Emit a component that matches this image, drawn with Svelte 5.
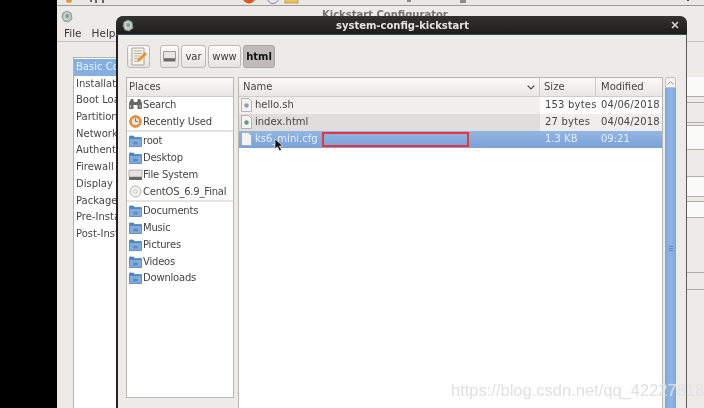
<script>
  const menu = ['Basic Co', 'Installation', 'Boot Loader', 'Partition', 'Network', 'Authentication', 'Firewall', 'Display', 'Package', 'Pre-Installation', 'Post-Installation'];
  const placesA = [{ n: 'Search', i: 'search' }, { n: 'Recently Used', i: 'recent' }];
  const placesB = [{ n: 'root', i: 'folder' }, { n: 'Desktop', i: 'folder' }, { n: 'File System', i: 'drive' }, { n: 'CentOS_6.9_Final', i: 'disc' }];
  const placesC = ['Documents', 'Music', 'Pictures', 'Videos', 'Downloads'].map((n) => ({ n, i: 'folder' }));
  const files = [
    { n: 'hello.sh', s: '153 bytes', m: '04/06/2018', c: 'odd', dot: '#8d9cc0' },
    { n: 'index.html', s: '27 bytes', m: '04/04/2018', c: 'even', dot: '#5f9a80' },
    { n: 'ks6_mini.cfg', s: '1.3 KB', m: '09:21', c: 'sel', dot: '' }
  ];
  const strip = [
    { h: 20, p: true }, { h: 6 }, { h: 20 }, { h: 3 }, { h: 24, p: true }, { h: 27 },
    { h: 20, p: true }, { h: 5 }, { h: 16, p: true }, { h: 55 }, { h: 17 }
  ];
</script>

{#snippet gem(x)}
  <svg class="gem" width="12" height="13" viewBox="0 0 12 13" style="margin-left:{x}px">
    <path d="M2 3 6 1l4 2 1 6-4 3-4-1-2-4z" fill="#b9c4bd" stroke="#7d8a84" stroke-width=".8"/>
    <path d="M4 4l3-1 2 3-2 3-3-1zM3 8l2 2" fill="#7fa58f" stroke="#e4e8e4" stroke-width=".7"/>
  </svg>
{/snippet}

{#snippet icon(t)}
  <svg class="ico" width="15" height="15" viewBox="0 0 15 15">
    {#if t === 'folder'}
      <path d="M1.500 3h4l1 1.500h7v9h-12z" fill="#4d86c6" stroke="#4a7cb6" stroke-width=".7"/>
      <path d="M2 6h11v7H2z" fill="#82acdc"/>
      <path d="M5 9.500c1-1.500 4-1.500 5 0v2H5z" fill="#5b8ec8"/>
    {:else if t === 'search'}
      <path d="M1 6l2-4h2l1 3h3l1-3h2l2 4v6H9.500V8h-4v4H1z" fill="#6a6864"/>
      <path d="M2.500 8v3M12 8v3" stroke="#c5c3bf" stroke-width="1"/>
    {:else if t === 'recent'}
      <circle cx="7.500" cy="7.500" r="6" fill="#e8923a" stroke="#d67e28" stroke-width=".6"/>
      <circle cx="7.500" cy="7.500" r="3.600" fill="#eee9df"/>
      <path d="M7.500 4.500v3h2.500" stroke="#7a7468" stroke-width="1" fill="none"/>
    {:else if t === 'drive'}
      <path d="M1 3h13v7H1z" fill="#e4e3e0" stroke="#9a9995" stroke-width=".7"/>
      <path d="M1 10h13v3H1z" fill="#6a6965"/>
    {:else}
      <circle cx="7.500" cy="7.500" r="5.500" fill="#f2f1ef" stroke="#b5b4b1" stroke-width="1"/>
      <circle cx="7.500" cy="7.500" r="1.800" fill="#fff" stroke="#b5b4b1" stroke-width=".8"/>
    {/if}
  </svg>
{/snippet}

{#snippet place(p)}
  <div class="place">{@render icon(p.i)}<span>{p.n}</span></div>
{/snippet}

<div class="desk">
  <div class="panel">
    <svg width="647" height="5" viewBox="0 0 647 5">
      <circle cx="12" cy="0" r="3" fill="#d9a040"/>
      <path d="M33 0h2v2h-2zM38 0h2v3h-2zM45 0h2v3h-2z" fill="#666"/>
      <circle cx="192" cy="-3" r="6.500" fill="#de5a1c"/>
      <circle cx="216" cy="-2" r="5.500" fill="#ece9ee" stroke="#8f78a8"/>
      <rect x="228" y="-3" width="13" height="6" fill="#e9c264" stroke="#b58d35" stroke-width=".7"/>
      <path d="M350 0h4v2h-4zM403 0h6v3h-6z" fill="#8d8c88"/>
      <path d="M630 0h2v1h-2z" fill="#444"/>
    </svg>
  </div>

  <div class="backwin">
    <div class="backtitle">
      {@render gem(4)}
      <span class="backname">Kickstart Configurator</span>
    </div>
    <div class="menubar"><span>File</span><span>Help</span></div>
    <div class="backmain">
      <ul class="steps">
        {#each menu as m, i}
          <li class:on={i === 0}>{m}</li>
        {/each}
      </ul>
      <div class="backform">
        {#each strip as s}
          <div class="stripe" class:pale={s.p} style="height:{s.h}px"></div>
        {/each}
      </div>
    </div>
  </div>

  <section class="dialog">
    <header class="dtitle">
      {@render gem(3)}
      <span class="dname">system-config-kickstart</span>
      <svg class="close" width="8" height="8" viewBox="0 0 8 8"><path d="M1 1l6 6M7 1 1 7" stroke="#d8d6d2" stroke-width="1.600"/></svg>
    </header>
    <div class="dbody">
      <div class="toolbar">
        <button class="btn edit" aria-label="edit">
          <svg width="18" height="19" viewBox="0 0 18 19">
            <path d="M2 1h12v17H2z" fill="#f5f3e8" stroke="#a7a59c"/>
            <path d="M4 4h8M4 6.500h8M4 9h6M4 11.500h5M4 14h4" stroke="#a8a69e" stroke-width=".9"/>
            <path d="M15 5l2 2-7 7-3 1 1-3z" fill="#e8912c"/>
          </svg>
        </button>
        <div class="crumbs">
          <button class="btn disk" aria-label="filesystem">
            <svg width="13" height="11" viewBox="0 0 13 11">
              <path d="M.5.500h12v7H.5z" fill="#e7e6e3" stroke="#9a9995"/>
              <path d="M.5 7.500h12v3H.5z" fill="#6a6965"/>
            </svg>
          </button>
          <button class="btn var">var</button>
          <button class="btn www">www</button>
          <button class="btn cur">html</button>
        </div>
      </div>

      <div class="panes">
        <aside class="places">
          <div class="colhead">Places</div>
          <div class="plist">
            {#each placesA as p}{@render place(p)}{/each}
            <hr />
            {#each placesB as p}{@render place(p)}{/each}
            <hr />
            {#each placesC as p}{@render place(p)}{/each}
          </div>
        </aside>
        <div class="grip"></div>
        <div class="filepane">
          <div class="fhead">
            <div class="cn">Name<svg width="8" height="5" viewBox="0 0 8 5"><path d="M.7.700 4 4 7.300.700" fill="none" stroke="#444" stroke-width="1.200"/></svg></div>
            <div class="cs">Size</div>
            <div class="cm">Modified</div>
          </div>
          {#each files as f}
            <div class="frow {f.c}">
              <div class="cn">
                <svg width="11" height="14" viewBox="0 0 11 14">
                  <path d="M.5.500h7l3 3v10H.5z" fill="#f3f3f1" stroke="#a5a5a2" stroke-width=".8"/>
                  {#if f.dot}<circle cx="5.500" cy="7.500" r="2.200" fill={f.dot}/>{/if}
                </svg>
                <span>{f.n}</span>
                {#if f.c === 'sel'}<i class="redbox"></i>{/if}
              </div>
              <div class="cs">{f.s}</div>
              <div class="cm">{f.m}</div>
            </div>
          {/each}
        </div>
        <div class="vbar">
          <div class="vup"><svg width="7" height="4" viewBox="0 0 7 4"><path d="M.5 3.500 3.500.700l3 2.800" fill="none" stroke="#999" /></svg></div>
          <div class="vthumb"><b></b></div>
        </div>
      </div>
    </div>
  </section>

  <svg class="cursor" width="10" height="14" viewBox="0 0 10 14">
    <path d="M1 1v10l2.500-2.200L5.500 13l2-1-2-4H9z" fill="#111" stroke="#eee" stroke-width=".7"/>
  </svg>

  <div class="mark">https://blog.csdn.net/qq_42227818</div>
</div>

<style>
  :global(body) { margin: 0; background: #000; }
  * { box-sizing: border-box; }
  .desk {
    position: relative;
    width: 704px;
    height: 408px;
    overflow: hidden;
    background: #000;
    font: 10px "DejaVu Sans", sans-serif;
    color: #454543;
  }
  .desk > :not(.mark) { filter: blur(0.55px); }

  .panel {
    position: absolute;
    left: 57px;
    top: 0;
    right: 0;
    height: 6px;
    background: #e9e7e3;
    border-bottom: 1px solid #9c9b98;
  }
  .panel svg { display: block; }

  .backwin {
    position: absolute;
    left: 57px;
    top: 6px;
    right: 0;
    bottom: 0;
    background: #edebe8;
    display: flex;
    flex-direction: column;
  }
  .backtitle {
    height: 19px;
    display: flex;
    align-items: flex-start;
    padding-top: 4px;
    flex: none;
  }
  .gem { flex: none; }
  .backname {
    margin-left: 249px;
    font-weight: bold;
    font-size: 10px;
    line-height: 10px;
    color: #77746f;
    white-space: nowrap;
  }
  .menubar {
    height: 17px;
    flex: none;
    display: flex;
    gap: 10px;
    padding-left: 7px;
    line-height: 17px;
    font-size: 10.500px;
    border-bottom: 1px solid #c4c2be;
    color: #3a3a38;
  }
  .backmain {
    flex: 1;
    display: flex;
    justify-content: space-between;
    min-height: 0;
    padding: 15px 0 0 16px;
  }
  .steps {
    list-style: none;
    margin: 0;
    padding: 1px 0 0;
    width: 200px;
    background: #fff;
    border: 1px solid #b5b3af;
    border-bottom: 0;
  }
  .steps li {
    height: 16.700px;
    line-height: 16.700px;
    padding-left: 2px;
    white-space: nowrap;
    overflow: hidden;
  }
  .steps li.on {
    background: #86aede;
    color: #e8f0fa;
  }
  .backform {
    width: 17px;
    padding-top: 20px;
    display: flex;
    flex-direction: column;
  }
  .stripe { background: #edebe8; border-bottom: 1px solid #b0aeaa; flex: none; }
  .stripe.pale { background: #fafaf9; }

  .dialog {
    position: absolute;
    left: 116px;
    top: 16px;
    width: 571px;
    bottom: 0;
    background: #edebe8;
    border-left: 2px solid #232220;
    border-right: 1px solid #5a5957;
    border-radius: 8px 8px 0 0;
    display: flex;
    flex-direction: column;
  }
  .dtitle {
    height: 19px;
    flex: none;
    margin: 0 -1px 0 -2px;
    background: linear-gradient(#333230, #1f1e1d);
    border-radius: 7px 7px 0 0;
    border-bottom: 1px solid #3a4a60;
    display: flex;
    align-items: center;
    justify-content: space-between;
    padding: 0 8px 0 3px;
  }
  .dname {
    font-weight: bold;
    font-size: 10px;
    color: #e6e4e0;
    white-space: nowrap;
  }
  .close { flex: none; }
  .dbody {
    flex: 1;
    min-height: 0;
    display: flex;
    flex-direction: column;
    padding: 10px 9px 0 8px;
  }
  .toolbar {
    display: flex;
    gap: 10px;
    height: 23px;
    flex: none;
    padding-left: 1px;
  }
  .crumbs { display: flex; gap: 2px; }
  .btn {
    height: 23px;
    margin: 0;
    padding: 0;
    border: 1px solid #bcbab6;
    border-radius: 3px;
    background: linear-gradient(#fbfbfa, #e6e4e1);
    display: flex;
    align-items: center;
    justify-content: center;
    font: 10px "DejaVu Sans", sans-serif;
    color: #3a3a38;
  }
  .edit { width: 23px; }
  .disk { width: 19px; }
  .var { width: 25px; }
  .www { width: 33px; }
  .cur {
    width: 32px;
    font-weight: bold;
    color: #111;
    background: #bfbcb7;
    border-color: #a9a7a2;
  }
  .panes {
    flex: 1;
    min-height: 0;
    display: flex;
    margin-top: 9px;
  }
  .places {
    width: 108px;
    flex: none;
    margin-bottom: 10px;
    display: flex;
    flex-direction: column;
    border: 1px solid #b9b7b3;
    background: #fff;
  }
  .colhead, .fhead {
    height: 19px;
    flex: none;
    background: linear-gradient(#fafaf9, #e9e7e4);
    border-bottom: 1px solid #cfcdc9;
    line-height: 18px;
  }
  .colhead { padding-left: 2px; }
  .plist { margin-top: -1px; }
  .place {
    height: 16.750px;
    display: flex;
    align-items: center;
    padding-left: 1px;
    white-space: nowrap;
    letter-spacing: -0.2px;
  }
  .ico { flex: none; }
  .plist hr {
    border: 0;
    height: 2px;
    background: #e6e4e1;
    margin: 0.500px 0 0.500px;
  }
  .grip { width: 4px; flex: none; }
  .filepane {
    flex: 1;
    min-width: 0;
    background: #fff;
    border: 1px solid #b9b7b3;
    border-bottom: 0;
  }
  .fhead, .frow { display: flex; }
  .cn {
    width: 301px;
    flex: none;
    display: flex;
    align-items: center;
    padding-left: 4px;
    position: relative;
  }
  .fhead .cn { border-right: 1px solid #cfcdc9; justify-content: space-between; padding-right: 4px; }
  .cs { width: 56px; flex: none; padding-left: 5px; white-space: nowrap; }
  .odd .cs, .even .cs { letter-spacing: 0.2px; }
  .odd .cm, .even .cm { letter-spacing: 0.1px; }
  .fhead .cs { border-right: 1px solid #cfcdc9; padding-left: 4px; }
  .cm { flex: 1; padding-left: 5px; white-space: nowrap; }
  .frow {
    height: 16.750px;
    line-height: 16.750px;
  }
  .frow .cn { gap: 3px; padding-left: 2px; }
  .frow .cn svg { flex: none; }
  .odd .cn { background: #f1f0ee; }
  .even .cn { background: #dfdedb; }
  .even .cs, .even .cm { background: #efeeec; }
  .sel {
    background: linear-gradient(#93b6e3, #79a2d7);
    color: #e4edf8;
  }
  .frow.sel { margin-top: .5px; }
  .redbox {
    position: absolute;
    left: 83px;
    top: 1px;
    width: 147px;
    height: 15px;
    border: 2.500px solid #ea3440;
  }
  .vbar {
    width: 14px;
    flex: none;
    padding: 0 1px 0 2px;
    display: flex;
    flex-direction: column;
  }
  .vup {
    height: 11px;
    flex: none;
    background: #f3f2f0;
    border: 1px solid #c3c1bd;
    border-radius: 2px 2px 0 0;
    display: flex;
    align-items: center;
    justify-content: center;
  }
  .vthumb {
    flex: 1;
    background: linear-gradient(90deg, #7ea8dd, #8fb5e6 50%, #7ea8dd);
    display: flex;
    justify-content: center;
    padding-top: 158px;
  }
  .vthumb b {
    width: 4px;
    height: 6px;
    background: repeating-linear-gradient(#5f86b8 0 1px, transparent 1px 2px);
  }
  .cursor {
    position: absolute;
    left: 274px;
    top: 138px;
  }
  .mark {
    position: absolute;
    left: 451px;
    top: 381px;
    font: 16.500px "Liberation Sans", sans-serif;
    line-height: 18px;
    white-space: nowrap;
    color: rgba(218, 218, 218, 0.85);
    text-shadow: 0 0 1px rgba(255, 255, 255, 0.6);
    filter: blur(0.3px);
  }
</style>
